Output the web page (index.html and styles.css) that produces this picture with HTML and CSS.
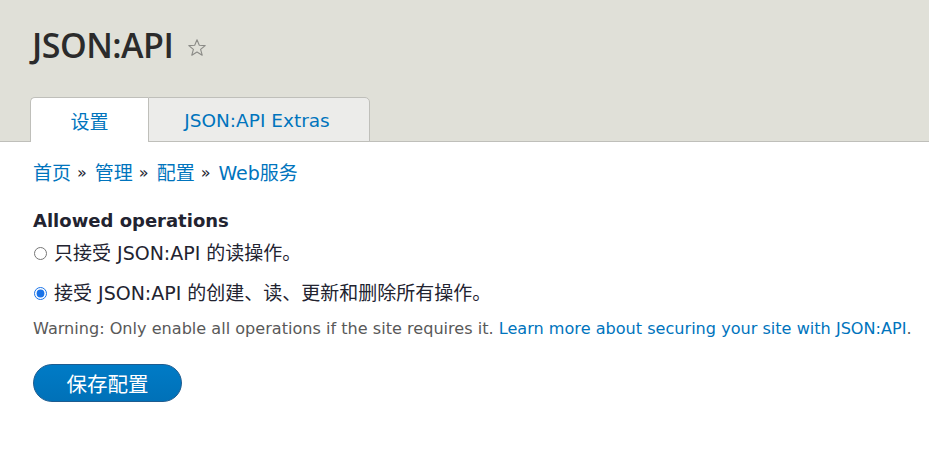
FILE: index.html
```html
<!DOCTYPE html>
<html lang="zh-CN">
<head>
<meta charset="utf-8">
<title>JSON:API</title>
<link rel="stylesheet" href="styles.css">
</head>
<body>
<header class="page-header">
  <div class="title-row">
    <h1 class="page-title">JSON:API</h1>
    <svg class="star" width="20" height="20" viewBox="0 0 20 20" aria-hidden="true">
      <path d="M10 1.8 L12.3 7.3 L18.2 7.6 L13.6 11.4 L15.2 17.2 L10 14 L4.8 17.2 L6.4 11.4 L1.8 7.6 L7.7 7.3 Z" fill="none" stroke="#8a8a86" stroke-width="1.1" stroke-linejoin="round"/>
    </svg>
  </div>
  <nav class="tabs">
    <a class="tab is-active" href="#">设置</a>
    <a class="tab" href="#">JSON:API Extras</a>
  </nav>
</header>
<main class="content">
  <nav class="breadcrumb">
    <a href="#">首页</a><span class="sep">»</span><a href="#">管理</a><span class="sep">»</span><a href="#">配置</a><span class="sep">»</span><a href="#">Web服务</a>
  </nav>
  <form class="form">
    <fieldset class="fieldset">
      <legend class="legend">Allowed operations</legend>
      <label class="radio"><input type="radio" name="ops" class="radio-input"><span>只接受 JSON:API 的读操作。</span></label>
      <label class="radio"><input type="radio" name="ops" class="radio-input" checked><span>接受 JSON:API 的创建、读、更新和删除所有操作。</span></label>
      <p class="description">Warning: Only enable all operations if the site requires it. <a href="#">Learn more about securing your site with JSON:API</a>.</p>
    </fieldset>
    <button type="button" class="button-primary">保存配置</button>
  </form>
</main>
</body>
</html>
```

FILE: styles.css
```css
* { box-sizing: border-box; }
html, body { margin: 0; padding: 0; background: #fff; }
body {
  font-family: "DejaVu Sans", "Noto Sans CJK SC", sans-serif;
  color: #222330;
}
a { color: #0074bd; text-decoration: none; }

.page-header {
  background: #e0e0d8;
  border-bottom: 1px solid #bfbfba;
  padding: 0 0 0 30px;
  height: 142px;
  display: flex;
  flex-direction: column;
  justify-content: space-between;
}
.title-row {
  display: flex;
  align-items: center;
  padding: 24px 0 0 2px;
  gap: 14px;
}
.page-title {
  margin: 0;
  font-family: "Open Sans", sans-serif;
  font-weight: 600;
  font-size: 34px;
  letter-spacing: -0.5px;
  line-height: 42px;
  color: #2b2b2b;
}
.star { margin-top: 6px; }

.tabs {
  display: flex;
  margin-bottom: -1px;
}
.tab {
  height: 45px;
  display: flex;
  align-items: center;
  justify-content: center;
  font-size: 18.5px;
  color: #0074bd;
  background: #ececea;
  border: 1px solid #bfbfba;
  border-bottom: 0;
  border-radius: 5px 5px 0 0;
}
.tab.is-active {
  width: 118px;
  background: #fff;
  font-family: "Noto Sans CJK SC", sans-serif;
  font-size: 19px;
  border-right: 0;
  border-radius: 5px 0 0 0;
}
.tab + .tab {
  width: 222px;
  border-radius: 0 5px 0 0;
  border-left: 1px solid #bfbfba;
  padding: 1px 4px 0 0;
  border-bottom: 1px solid #bfbfba;
}

.content { padding: 0 10px 0 33px; }
.breadcrumb {
  margin-top: 18px;
  font-size: 19px;
  line-height: 26px;
  display: flex;
  align-items: center;
}
.breadcrumb a { color: #0074bd; }
.breadcrumb .sep { color: #222330; margin: 0 8px 0 6px; font-size: 16px; }

.form { margin-top: 23px; }
.fieldset { border: 0; margin: 0; padding: 0; min-width: 0; }
.legend {
  padding: 0;
  font-weight: bold;
  font-size: 18px;
  line-height: 24px;
  color: #222330;
}
.radio {
  display: flex;
  align-items: center;
  font-size: 19px;
  line-height: 26px;
  color: #222330;
  margin-top: 7px;
}
.radio + .radio { margin-top: 14px; }
.radio-input {
  margin: 0 7px 0 1px;
  width: 13px;
  height: 13px;
  accent-color: #1a73e8;
}
.description {
  margin: 13px 0 0 0;
  font-size: 16.1px;
  line-height: 20px;
  color: #595959;
  white-space: nowrap;
}
.description a { color: #0074bd; }

.button-primary {
  margin-top: 25px;
  width: 149px;
  height: 38px;
  border-radius: 20px;
  border: 1px solid #1e5c90;
  background: linear-gradient(#007bc6, #0071b8);
  color: #fff;
  font-family: "Noto Sans CJK SC", sans-serif;
  font-size: 20.5px;
  line-height: 1;
  padding: 0;
  cursor: pointer;
}
```
